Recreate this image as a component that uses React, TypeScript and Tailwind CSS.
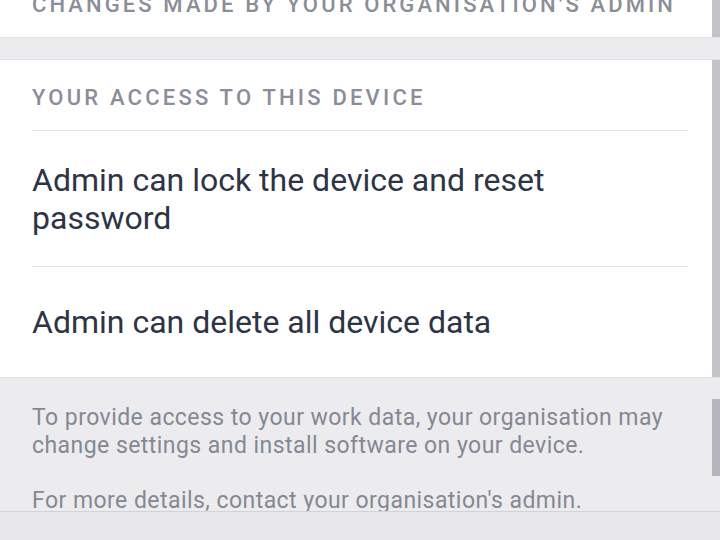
import React from "react";

const font = { fontFamily: "Roboto, 'Noto Sans', sans-serif" };

const SectionHeader = ({ title, tracking }: { title: string; tracking: string }) => (
  <div className="px-8 pt-[26px] pb-[20px]">
    <p className={`text-[22px] leading-[24px] font-medium ${tracking} text-[#8a8e98] uppercase`}>{title}</p>
  </div>
);

const Item = ({ text, padding }: { text: string; padding: string }) => (
  <div className={`border-t border-[#e4e4e7] ${padding}`}>
    <p className="text-[32px] leading-[38px] text-[#2d3446]">{text}</p>
  </div>
);

export default function App() {
  return (
    <div className="relative h-[540px] w-[720px] overflow-hidden bg-[#ececee]" style={font}>
      <div className="-mt-[33px]">
        {/* Card cut off at the top */}
        <div className="relative bg-white border-b border-[#e2e2e5]">
          <SectionHeader title="Changes made by your organisation's admin" tracking="tracking-[3.1px]" />
          <div className="absolute right-0 top-0 bottom-0 w-2 bg-[#c3c4c9]" />
        </div>

        <div className="h-[21px]" />

        {/* Access card */}
        <div className="relative bg-white border-y border-[#e2e2e5]">
          <SectionHeader title="Your access to this device" tracking="tracking-[3.2px]" />
          <div className="mx-8">
            <Item text="Admin can lock the device and reset password" padding="pt-[30px] pb-[29px] pr-28" />
            <Item text="Admin can delete all device data" padding="pt-[36px] pb-[36px]" />
          </div>
          <div className="absolute right-0 top-0 bottom-0 w-2 bg-[#c3c4c9]" />
        </div>

        {/* Footer info */}
        <div className="relative px-8 pt-[26px] text-[23px] leading-[27.5px] tracking-[0.45px] text-[#858892]">
          <p>To provide access to your work data, your organisation may change settings and install software on your device.</p>
          <p className="mt-[27.5px]">For more details, contact your organisation's admin.</p>
          <div className="absolute right-0 top-[21px] h-[77px] w-2 bg-[#b5b6bd]" />
        </div>
      </div>

      <div className="absolute bottom-0 left-0 right-0 h-[29px] border-t border-[#d2d3d7] bg-[#e7e7eb]" />
    </div>
  );
}
